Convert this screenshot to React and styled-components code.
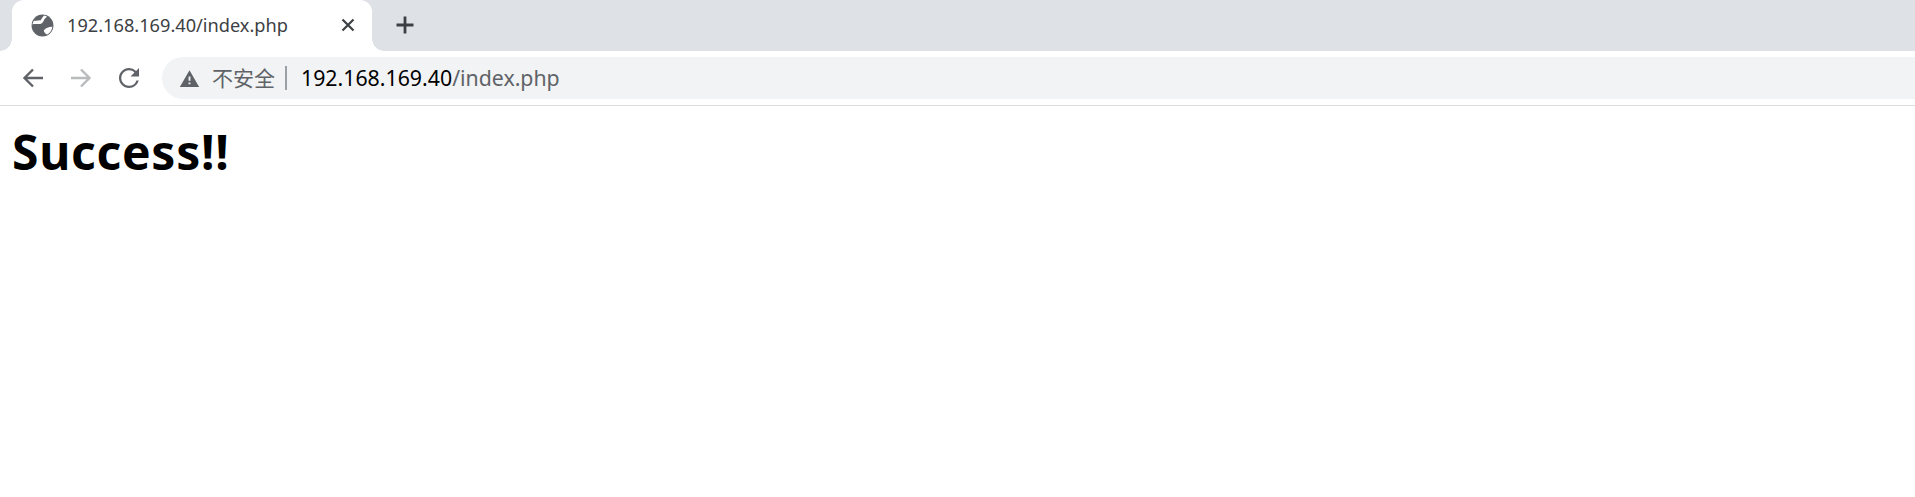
import React from 'react';
import styled, { createGlobalStyle } from 'styled-components';

const GlobalStyle = createGlobalStyle`
  html, body {
    margin: 0;
    padding: 0;
    background: #fff;
  }
`;

const Window = styled.div`
  width: 1915px;
  height: 497px;
  overflow: hidden;
  background: #fff;
  font-family: 'Noto Sans', 'Noto Sans CJK SC', sans-serif;
`;

const TabStrip = styled.div`
  height: 51px;
  background: #dee1e6;
  display: flex;
  align-items: stretch;
  padding-left: 12px;
`;

const Tab = styled.div`
  position: relative;
  width: 360px;
  box-sizing: border-box;
  background: #fff;
  border-radius: 12px 12px 0 0;
  display: flex;
  align-items: center;
  padding: 0 15px 1px 18px;

  &::before,
  &::after {
    content: '';
    position: absolute;
    bottom: 0;
    width: 12px;
    height: 12px;
  }
  &::before {
    left: -12px;
    background: radial-gradient(circle at 0 0, #dee1e6 11.5px, #fff 12px);
  }
  &::after {
    right: -12px;
    background: radial-gradient(circle at 100% 0, #dee1e6 11.5px, #fff 12px);
  }
`;

const TabIcon = styled.svg`
  display: block;
  flex: none;
`;

const TabTitle = styled.span`
  flex: 1;
  margin-left: 12px;
  font-size: 18.2px;
  color: #3c4043;
  white-space: nowrap;
`;

const NewTab = styled.div`
  width: 40px;
  margin-left: 13px;
  display: flex;
  align-items: center;
  justify-content: center;
  padding-bottom: 1px;
`;

const Toolbar = styled.div`
  height: 54px;
  box-sizing: border-box;
  display: flex;
  align-items: center;
  padding: 6px 0;
`;

const NavButtons = styled.div`
  width: 162px;
  flex: none;
  display: flex;
  align-items: center;
  padding-left: 21px;
  gap: 24px;
  box-sizing: border-box;
`;

const NavIcon = styled.svg`
  width: 24px;
  height: 24px;
  display: block;
  flex: none;
`;

const Omnibox = styled.div`
  flex: 1;
  height: 42px;
  background: #f1f3f4;
  border-radius: 21px 0 0 21px;
  display: flex;
  align-items: center;
  padding-left: 17px;
  font-size: 21.3px;
  white-space: nowrap;
`;

const Security = styled.span`
  margin-left: 12px;
  padding-bottom: 2px;
  color: #5f6368;
  font-size: 21px;
  font-family: 'Noto Sans CJK SC', sans-serif;
`;

const Divider = styled.span`
  width: 2px;
  height: 24px;
  background: #9aa0a6;
  margin: 0 14px 0 10px;
`;

const Host = styled.span`
  padding-bottom: 2px;
  color: #000;
`;

const Path = styled.span`
  padding-bottom: 2px;
  color: #5f6368;
`;

const Rule = styled.div`
  height: 1px;
  background: #dadce0;
`;

const Content = styled.main`
  padding: 13px 12px;
`;

const Heading = styled.h1`
  margin: 0;
  font-size: 48px;
  line-height: 66px;
  font-weight: 700;
  letter-spacing: 0.7px;
  color: #000;
  font-family: 'Noto Sans', sans-serif;
`;

function GlobeIcon() {
  return (
    <TabIcon width="25" height="25" viewBox="0 0 24 24">
      <circle cx="12" cy="12" r="10.500" fill="#5f6368" />
      <path
        fill="#fff"
        d="M2.400 11C5 9.800 8 11.200 10.600 10.200 12.800 9.300 13.200 7 14 5.800L16.400 3.400C15.400 2.900 14.500 2.600 13.600 2.400 12.200 3.800 11.200 5.400 10.600 6.500 9.500 7.700 5.500 7 3.400 7.800 2.800 8.800 2.500 9.900 2.400 11zM21.500 13.200C19 13 15 14 13.200 16.800 13.600 18.800 15 20 16.400 20.700 19.200 19.400 21 16.500 21.500 13.200z"
      />
    </TabIcon>
  );
}

function CloseIcon() {
  return (
    <TabIcon width="18" height="18" viewBox="0 0 18 18">
      <path d="M3.500 3.500l11 11M14.500 3.500l-11 11" stroke="#3c4043" strokeWidth="2.200" fill="none" />
    </TabIcon>
  );
}

function PlusIcon() {
  return (
    <TabIcon width="20" height="20" viewBox="0 0 20 20">
      <path d="M10 1.500v17M1.500 10h17" stroke="#3c4043" strokeWidth="2.800" fill="none" />
    </TabIcon>
  );
}

function WarningIcon() {
  return (
    <TabIcon width="21" height="21" viewBox="0 0 20 20">
      <path fill="#5f6368" d="M.8 18h18.400L10 2.200.8 18zm10.100-2.500H9.100v-1.800h1.800v1.800zm0-3.300H9.100V8h1.800v4.200z" />
    </TabIcon>
  );
}

export default function App() {
  return (
    <Window>
      <GlobalStyle />
      <TabStrip>
        <Tab>
          <GlobeIcon />
          <TabTitle>192.168.169.40/index.php</TabTitle>
          <CloseIcon />
        </Tab>
        <NewTab>
          <PlusIcon />
        </NewTab>
      </TabStrip>
      <Toolbar>
        <NavButtons>
          <NavIcon viewBox="0 0 24 24">
            <path d="M22 12H4M12 3.500L3.500 12l8.500 8.500" stroke="#5f6368" strokeWidth="2.400" fill="none" />
          </NavIcon>
          <NavIcon viewBox="0 0 24 24">
            <path d="M2 12H20M12 3.500l8.500 8.500-8.500 8.500" stroke="#b8babc" strokeWidth="2.400" fill="none" />
          </NavIcon>
          <NavIcon viewBox="0 0 24 24">
            <path
              fill="#5f6368"
              d="M19.100 4.900A9.950 9.950 0 0 0 12 2C6.500 2 2 6.500 2 12s4.500 10 10 10c4.700 0 8.600-3.200 9.700-7.500h-2.300A7.800 7.800 0 0 1 12 19.800 7.800 7.800 0 0 1 4.200 12 7.800 7.800 0 0 1 12 4.200c2.100 0 4 .9 5.500 2.300L13.500 10.500H22V2l-2.900 2.900z"
            />
          </NavIcon>
        </NavButtons>
        <Omnibox>
          <WarningIcon />
          <Security>不安全</Security>
          <Divider />
          <Host>192.168.169.40</Host>
          <Path>/index.php</Path>
        </Omnibox>
      </Toolbar>
      <Rule />
      <Content>
        <Heading>Success!!</Heading>
      </Content>
    </Window>
  );
}
